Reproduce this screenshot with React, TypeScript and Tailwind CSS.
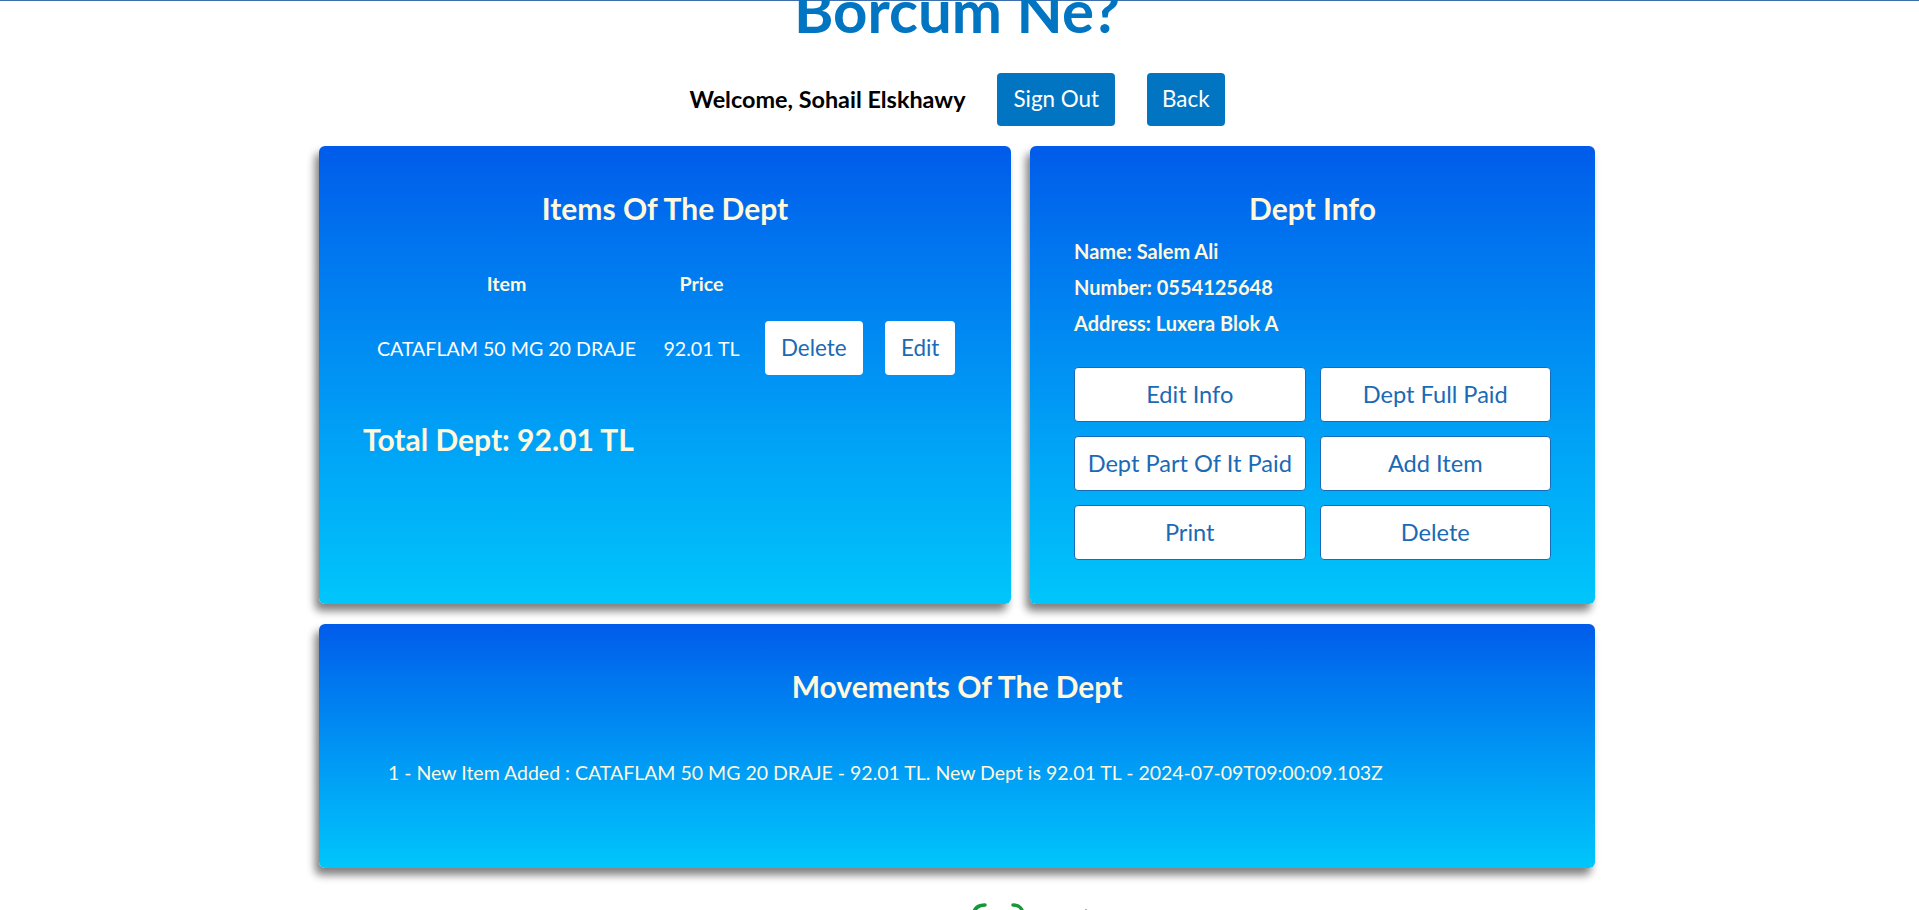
const deptButtons = [
  "Edit Info",
  "Dept Full Paid",
  "Dept Part Of It Paid",
  "Add Item",
  "Print",
  "Delete",
];

export default function App() {
  return (
    <div className="min-h-screen border-t border-[#3d6fae] bg-white pr-[5px] font-['Lato',sans-serif]">
      <h1 className="-mt-[27px] text-center text-[60px] font-bold leading-[1.2] text-[#0175c2]">
        Borcum Ne?
      </h1>

      {/* welcome bar */}
      <div className="mt-[27px] flex items-center justify-center gap-[32px]">
        <span className="text-[23.4px] font-bold text-black">Welcome, Sohail Elskhawy</span>
        <button className="rounded bg-[#0175c2] px-4 py-[13px] text-[22.4px] leading-[1.2] text-white">
          Sign Out
        </button>
        <button className="rounded bg-[#0175c2] px-[15px] py-[13px] text-[22.4px] leading-[1.2] text-white">
          Back
        </button>
      </div>

      <div className="mx-auto mt-[20px] w-[1276px]">
        <div className="grid grid-cols-[692px_565px] gap-[19px]">
          {/* Items */}
          <div className="rounded-md bg-linear-to-b from-[#005bea] to-[#00c6fb] p-[44px] text-[#fff8dc] shadow-[-4px_7px_8px_#808080]">
            <h2 className="text-center text-[30px] font-bold leading-[1.2]">Items Of The Dept</h2>
            <table className="mt-[33px] w-full table-fixed whitespace-nowrap text-center">
              <colgroup>
                <col className="w-[287px]" />
                <col className="w-[103px]" />
                <col className="w-[120px]" />
                <col className="w-[94px]" />
              </colgroup>
              <thead>
                <tr>
                  <th className="px-[12px] py-[13px] text-[19.6px] font-bold leading-[1.2]">Item</th>
                  <th className="px-[12px] py-[13px] text-[19.6px] font-bold leading-[1.2]">Price</th>
                  <th />
                  <th />
                </tr>
              </thead>
              <tbody>
                <tr>
                  <td className="px-[12px] py-[13px] text-[19.6px] leading-[1.2] text-white">CATAFLAM 50 MG 20 DRAJE</td>
                  <td className="px-[12px] py-[13px] text-[19.6px] leading-[1.2] text-white">92.01 TL</td>
                  <td className="px-[12px] py-[13px]">
                    <button className="rounded bg-white px-4 py-[13.5px] text-[22.4px] leading-[1.2] text-[#1a6ab5]">
                      Delete
                    </button>
                  </td>
                  <td className="px-[12px] py-[13px]">
                    <button className="rounded bg-white px-4 py-[13.5px] text-[22.4px] leading-[1.2] text-[#1a6ab5]">
                      Edit
                    </button>
                  </td>
                </tr>
              </tbody>
            </table>
            <h2 className="mt-[33px] text-[30px] font-bold leading-[1.2]">Total Dept: 92.01 TL</h2>
          </div>

          {/* Info */}
          <div className="rounded-md bg-linear-to-b from-[#005bea] to-[#00c6fb] p-[44px] text-[#fff8dc] shadow-[-4px_7px_8px_#808080]">
            <h2 className="text-center text-[30px] font-bold leading-[1.2]">Dept Info</h2>
            <div className="mt-[7px] text-[20px] font-bold leading-[36px]">
              <p>Name: Salem Ali</p>
              <p>Number: 0554125648</p>
              <p>Address: Luxera Blok A</p>
            </div>
            <div className="mt-[26px] grid grid-cols-2 gap-[14px]">
              {deptButtons.map((label) => (
                <button
                  key={label}
                  className="h-[55px] rounded border border-[#1a6ab5] bg-white text-[23.6px] leading-[1.2] text-[#1a6ab5]"
                >
                  {label}
                </button>
              ))}
            </div>
          </div>
        </div>

        {/* Movements */}
        <div className="mt-[20px] rounded-md bg-linear-to-b from-[#005bea] to-[#00c6fb] p-[44px] text-[#fff8dc] shadow-[-4px_7px_8px_#808080]">
          <h2 className="text-center text-[30px] font-bold leading-[1.2]">Movements Of The Dept</h2>
          <ul className="mb-[40px] mt-[57px] pl-[25px]">
            <li className="text-[19.5px] leading-[1.2]">
              1 - New Item Added : CATAFLAM 50 MG 20 DRAJE - 92.01 TL. New Dept is 92.01 TL - 2024-07-09T09:00:09.103Z
            </li>
          </ul>
        </div>
      </div>

      {/* footer peeking in */}
      <div className="mt-[35px] flex justify-center">
        <svg width="260" height="30" viewBox="0 0 260 30" fill="none">
          <path d="M158 2 C151 2 147 6 146 12" stroke="#17963a" strokeWidth="3.5" strokeLinecap="round" />
          <path d="M186 2 C192 2 196 6 196 12" stroke="#17963a" strokeWidth="3.5" strokeLinecap="round" />
          <circle cx="259" cy="7" r="1" fill="#999" />
        </svg>
      </div>
    </div>
  );
}
